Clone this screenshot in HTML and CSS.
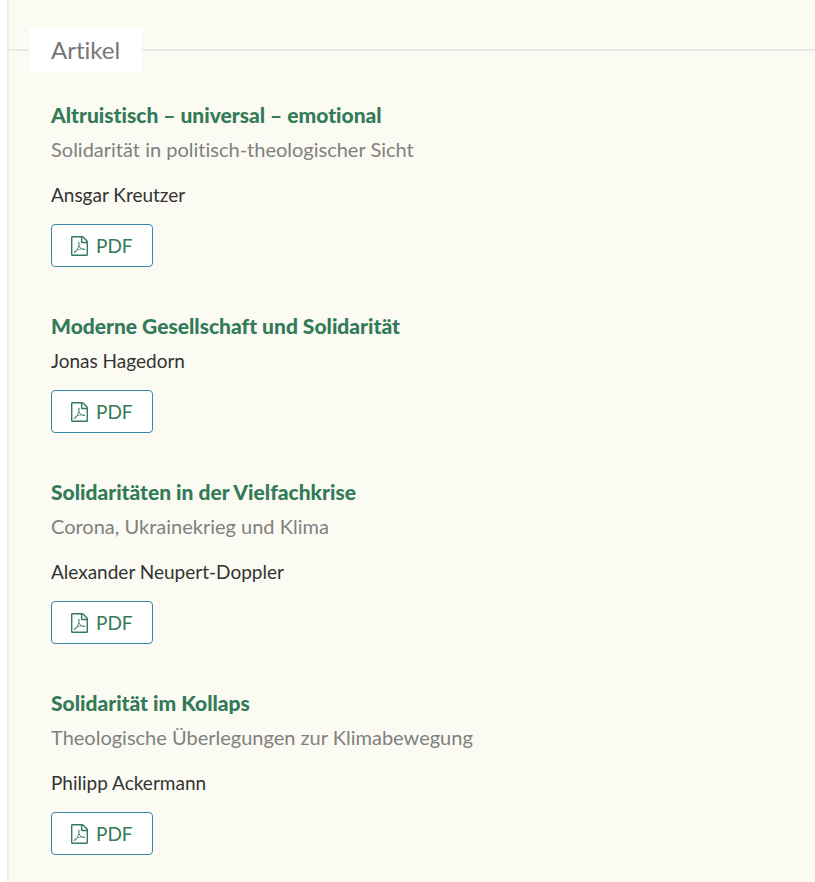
FILE: index.html
```html
<!DOCTYPE html>
<html lang="de">
<head>
  <meta charset="UTF-8">
  <meta name="viewport" content="width=device-width, initial-scale=1.0">
  <title>Artikel</title>
  <link rel="stylesheet" href="styles.css">
</head>
<body>
  <!-- PDF icon, reused by every download link -->
  <svg class="sprite" aria-hidden="true">
    <symbol id="icon-pdf" viewBox="0 0 1536 1792">
      <path d="M1468 380q28 28 48 76t20 88v1152q0 40-28 68t-68 28H96q-40 0-68-28t-28-68V96q0-40 28-68T96 0h896q40 0 88 20t76 48zm-444-244v376h376q-10-29-22-41l-313-313q-12-12-41-22zm384 1528V640H992q-40 0-68-28t-28-68V128H128v1536h1280zm-514-593q33 26 84 56 59-7 117-7 147 0 177 49 16 22 2 52 0 1-1 2l-2 2v1q-6 38-71 38-48 0-115-20t-130-53q-221 24-392 83-153 262-242 262-15 0-28-7l-24-12q-1-1-6-5-10-10-6-36 9-40 56-91.500t132-96.500q14-9 23 6 2 2 2 4 52-85 107-197 68-136 104-262-24-82-30.500-159.500T657 552q11-40 42-40h22q23 0 35 15 18 21 9 68-2 6-4 8 1 3 1 8v30q-2 123-14 192 55 164 146 238zm-576 411q52-24 137-158-51 40-87.500 84t-49.500 74zm398-920q-15 42-2 132 1-7 7-44 0-3 7-43 1-4 4-8-1-1-1-2-1-2-1-3-1-22-13-36 0 1-1 2v2zm-124 661q135-54 284-81-2-1-13-9.500t-16-13.500q-76-67-127-176-27 86-83 197-30 56-45 83zm646-16q-24-24-140-24 76 28 124 28 14 0 18-1 0-1-2-3z"/>
    </symbol>
  </svg>

  <main class="issue">
    <section class="section">
      <h2 class="section-title"><span>Artikel</span></h2>

      <ul class="articles">
        <li class="article">
          <h3 class="title">
            <a href="#">Altruistisch – universal – emotional</a>
            <small class="subtitle">Solidarität in politisch-theologischer Sicht</small>
          </h3>
          <div class="authors">Ansgar Kreutzer</div>
          <a class="galley-link" href="#"><svg class="icon" aria-hidden="true"><use href="#icon-pdf"/></svg>PDF</a>
        </li>

        <li class="article">
          <h3 class="title">
            <a href="#">Moderne Gesellschaft und Solidarität</a>
          </h3>
          <div class="authors">Jonas Hagedorn</div>
          <a class="galley-link" href="#"><svg class="icon" aria-hidden="true"><use href="#icon-pdf"/></svg>PDF</a>
        </li>

        <li class="article">
          <h3 class="title">
            <a href="#">Solidaritäten in der Vielfachkrise</a>
            <small class="subtitle">Corona, Ukrainekrieg und Klima</small>
          </h3>
          <div class="authors">Alexander Neupert-Doppler</div>
          <a class="galley-link" href="#"><svg class="icon" aria-hidden="true"><use href="#icon-pdf"/></svg>PDF</a>
        </li>

        <li class="article">
          <h3 class="title">
            <a href="#">Solidarität im Kollaps</a>
            <small class="subtitle">Theologische Überlegungen zur Klimabewegung</small>
          </h3>
          <div class="authors">Philipp Ackermann</div>
          <a class="galley-link" href="#"><svg class="icon" aria-hidden="true"><use href="#icon-pdf"/></svg>PDF</a>
        </li>
      </ul>
    </section>
  </main>
</body>
</html>
```

FILE: styles.css
```css
* {
  box-sizing: border-box;
}
body {
  margin: 0;
  background-color: #fff;
  color: #333;
  font-family: Lato, "Open Sans", sans-serif;
  font-size: 19px;
  font-variant-ligatures: none;
  line-height: 28px;
}
.sprite {
  display: none;
}
.issue {
  min-height: 100vh;
  margin-left: 7px;
  padding-top: 28px;
  border-left: 2px solid #ecede8;
  background-color: #fbfbf3;
}

/* Section heading with the rule running behind it */
.section-title {
  display: flex;
  align-items: center;
  margin: 0;
  color: #777;
  font-size: 24px;
  font-weight: 400;
  line-height: 44px;
}
.section-title::before,
.section-title::after {
  content: "";
  height: 2px;
  background-color: #e8e9e4;
}
.section-title::before {
  width: 20px;
}
.section-title::after {
  flex: 1;
}
.section-title span {
  padding: 0 22px;
  background-color: #fff;
}

.articles {
  margin: 0;
  padding: 26px 42px 0;
  list-style: none;
}
.article {
  margin-bottom: 42px;
}
.title {
  margin: 0 0 4px;
  font-size: 21px;
  font-weight: 900;
  line-height: 34px;
}
.title a {
  display: block;
  color: #337a58;
  text-decoration: none;
}
.title a:hover {
  color: #4aa57a;
}
.subtitle {
  display: block;
  padding-bottom: 11px;
  color: #808080;
  font-size: 20px;
  font-weight: 400;
}
.authors {
  margin-bottom: 15px;
}
.galley-link {
  display: inline-flex;
  align-items: center;
  height: 43px;
  padding: 0 19px;
  border: 1px solid #3a86a8;
  border-radius: 4px;
  background-color: #fff;
  color: #337a58;
  text-decoration: none;
  vertical-align: top;
}
.galley-link:hover {
  border-color: #4aa57a;
}
.icon {
  width: 17px;
  height: 20px;
  margin-right: 8px;
  fill: currentColor;
}
```
